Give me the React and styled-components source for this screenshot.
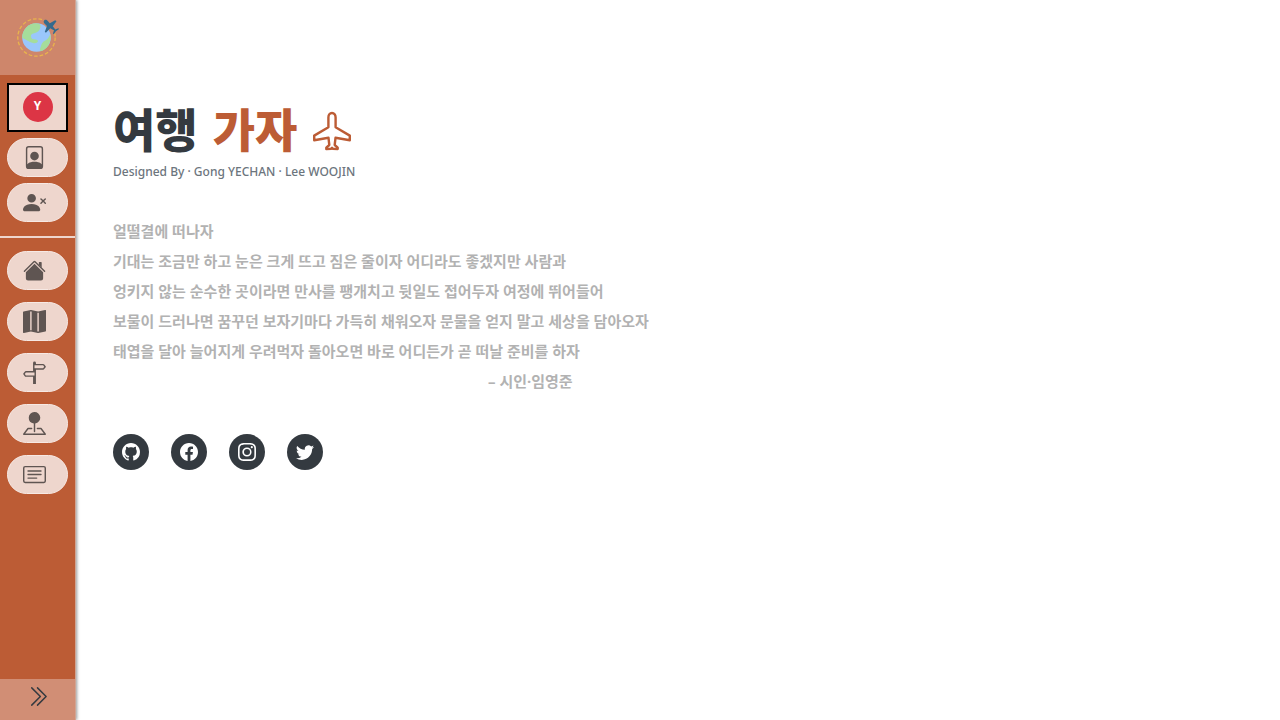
import React from 'react';
import styled, { createGlobalStyle } from 'styled-components';
import {
  BsFilePerson,
  BsPersonXFill,
  BsMapFill,
  BsSignpostSplit,
  BsPinMapFill,
  BsCardText,
  BsChevronDoubleRight,
  BsGithub,
  BsFacebook,
  BsInstagram,
  BsTwitter,
} from 'react-icons/bs';

const Global = createGlobalStyle`
  *, *::before, *::after { box-sizing: border-box; }
  body {
    margin: 0;
    background: #fff;
    color: #343a40;
    font-family: 'Noto Sans', 'Noto Sans CJK KR', sans-serif;
  }
`;

const Page = styled.div`
  display: flex;
  min-height: 100vh;
`;

const Sidebar = styled.aside`
  display: flex;
  flex-direction: column;
  flex: none;
  width: 76px;
  background: #bc5c35;
  border-right: 1px solid #d0a594;
  box-shadow: 1px 0 3px rgba(0, 0, 0, 0.4);
`;

const Brand = styled.a`
  display: flex;
  justify-content: center;
  height: 75px;
  padding-top: 16px;
  background: #ce866b;
`;

const NavGroup = styled.nav`
  display: flex;
  flex-direction: column;
  align-items: center;
  gap: ${(p) => p.$gap}px;
  padding: ${(p) => p.$pad};
`;

const NavButton = styled.button`
  display: flex;
  align-items: center;
  width: 61px;
  height: 39px;
  padding: 0 0 0 15px;
  border: 1px solid #f7e9e4;
  border-radius: 20px;
  background: #eed6cd;
  color: #5f5552;
  cursor: pointer;
`;

const ProfileButton = styled(NavButton)`
  justify-content: center;
  height: 49px;
  padding: 0 0 2px;
  border: 2px solid #000;
  border-radius: 0;
`;

const Avatar = styled.span`
  width: 30px;
  height: 30px;
  border-radius: 50%;
  background: #dc3545;
  color: #fff;
  font: 700 12px/28px 'Noto Sans', sans-serif;
  text-align: center;
`;

const Divider = styled.hr`
  width: 100%;
  height: 2px;
  margin: 0;
  border: 0;
  background: #eed6cd;
`;

const Expand = styled.button`
  display: flex;
  align-items: center;
  justify-content: center;
  height: 41px;
  margin-top: auto;
  padding: 0 0 6px;
  border: 0;
  background: #d18e75;
  color: #343a40;
  cursor: pointer;
`;

const Main = styled.main`
  flex: 1;
  min-width: 0;
  padding: 96px 37px 40px;
`;

const Title = styled.h1`
  display: flex;
  align-items: center;
  gap: 15px;
  margin: 0;
  font: 900 46px/62px 'Noto Sans CJK KR', sans-serif;

  svg {
    margin-top: 8px;
  }
`;

const Accent = styled.span`
  color: #bc5c35;
`;

const Credits = styled.p`
  margin: 4px 0 0;
  color: #6c757d;
  font-size: 12px;
  font-weight: 500;
  line-height: 20px;
`;

const Poem = styled.div`
  margin-top: 34px;
  color: #b2b2b2;
  font-size: 15px;
  font-weight: 700;
  line-height: 30px;
`;

const Line = styled.p`
  margin: 0;
`;

const Author = styled(Line)`
  padding-left: 375px;
`;

const Socials = styled.div`
  display: flex;
  gap: 22px;
  margin-top: 38px;
`;

const SocialLink = styled.a`
  display: flex;
  align-items: center;
  justify-content: center;
  width: 36px;
  height: 36px;
  border-radius: 50%;
  background: #343a40;
  color: #fff;
`;

function GlobeLogo() {
  return (
    <svg width="44" height="44" viewBox="0 0 44 44" aria-hidden="true">
      <circle cx="20.500" cy="21.500" r="18.700" fill="none" stroke="#e9b44c" strokeWidth="1.300" strokeDasharray="3.600 2" />
      <circle cx="20.500" cy="21.500" r="14.300" fill="#9ac7fb" />
      <path d="M6.300 22C6 14 12 7.300 20 7.200c2 0 4 .8 4.500 2 .3 3-1 5-2.500 6.300-2 1.700-5.500 1.500-7 3.500 0 2 .2 3.500 1.500 4 2 .5 5 .2 5.500 2-.5 2-3 2.500-5 2-4-.7-8-4-10.700-5z" fill="#a5dd9b" />
      <path d="M34.300 18c1.200 5-.8 14.500-9.300 17.200-2-1-.5-3.500 0-5.200.8-2.500 1.500-4 3.500-5 3-1.500 4.500-3.500 5.800-7z" fill="#a5dd9b" />
      <path d="M28.200 4.200c1.200-1 2.600-.4 3.600.8l2 2.200 5.400-3 1.300 1-3.700 5 2.500 3.300 3-1.300.8.900-3.200 2.200-2 3-1-.7 1-3-3.600-2.300-4.400 4.400-1.100-1 2.200-5.700-2.300-2.200c-1-1-1.500-2.500-.5-3.600z" fill="#356a8d" />
    </svg>
  );
}

function House() {
  return (
    <svg width="23" height="23" viewBox="0 0 16 16" fill="currentColor" aria-hidden="true">
      <path d="m8 3.293 6 6V13.500a1.500 1.500 0 0 1-1.500 1.500h-9A1.500 1.500 0 0 1 2 13.500V9.293l6-6zm5-.793V6l-2-2V2.500a.5.5 0 0 1 .5-.5h1a.5.5 0 0 1 .5.5z" />
      <path d="M7.293 1.500a1 1 0 0 1 1.414 0l6.647 6.646a.5.5 0 0 1-.708.708L8 2.207 1.354 8.854a.5.5 0 1 1-.708-.708L7.293 1.500z" />
    </svg>
  );
}

function Plane() {
  return (
    <svg width="40" height="40" viewBox="0 0 40 40" fill="none" stroke="#bc5c35" strokeWidth="2.400" strokeLinejoin="round" aria-hidden="true">
      <path d="M20 2c-2.200 0-3.600 2-3.600 4.500v9.700L2.200 24.600v4.600l14.300-2.400.8 7.200-3 2.600V38l4.700-.2 1-1 1 1 4.700.2v-1.400l-3-2.600.8-7.200 14.300 2.400v-4.600l-14.200-8.400V6.500C23.600 4 22.200 2 20 2z" />
    </svg>
  );
}

const account = [
  ['프로필', BsFilePerson],
  ['로그아웃', BsPersonXFill],
];

const places = [
  ['홈', House],
  ['지도', BsMapFill],
  ['여행지', BsSignpostSplit],
  ['위치', BsPinMapFill],
  ['게시판', BsCardText],
];

const poem = [
  '얼떨결에 떠나자',
  '기대는 조금만 하고 눈은 크게 뜨고 짐은 줄이자 어디라도 좋겠지만 사람과',
  '엉키지 않는 순수한 곳이라면 만사를 팽개치고 뒷일도 접어두자 여정에 뛰어들어',
  '보물이 드러나면 꿈꾸던 보자기마다 가득히 채워오자 문물을 얻지 말고 세상을 담아오자',
  '태엽을 달아 늘어지게 우려먹자 돌아오면 바로 어디든가 곧 떠날 준비를 하자',
];

const socials = [
  ['GitHub', BsGithub],
  ['Facebook', BsFacebook],
  ['Instagram', BsInstagram],
  ['Twitter', BsTwitter],
];

export default function App() {
  return (
    <Page>
      <Global />
      <Sidebar>
        <Brand href="#" aria-label="여행 가자">
          <GlobeLogo />
        </Brand>
        <NavGroup $gap={6} $pad="8px 0 14px">
          <ProfileButton type="button">
            <Avatar>Y</Avatar>
          </ProfileButton>
          {account.map(([label, Icon]) => (
            <NavButton key={label} type="button" aria-label={label}>
              <Icon size={23} />
            </NavButton>
          ))}
        </NavGroup>
        <Divider />
        <NavGroup $gap={12} $pad="13px 0">
          {places.map(([label, Icon]) => (
            <NavButton key={label} type="button" aria-label={label}>
              <Icon size={23} />
            </NavButton>
          ))}
        </NavGroup>
        <Expand type="button" aria-label="메뉴 펼치기">
          <BsChevronDoubleRight size={23} />
        </Expand>
      </Sidebar>
      <Main>
        <Title>
          <span>여행</span>
          <Accent>가자</Accent>
          <Plane />
        </Title>
        <Credits>Designed By · Gong YECHAN · Lee WOOJIN</Credits>
        <Poem>
          {poem.map((text) => (
            <Line key={text}>{text}</Line>
          ))}
          <Author>– 시인·임영준</Author>
        </Poem>
        <Socials>
          {socials.map(([label, Icon]) => (
            <SocialLink key={label} href="#" aria-label={label}>
              <Icon size={18} />
            </SocialLink>
          ))}
        </Socials>
      </Main>
    </Page>
  );
}
